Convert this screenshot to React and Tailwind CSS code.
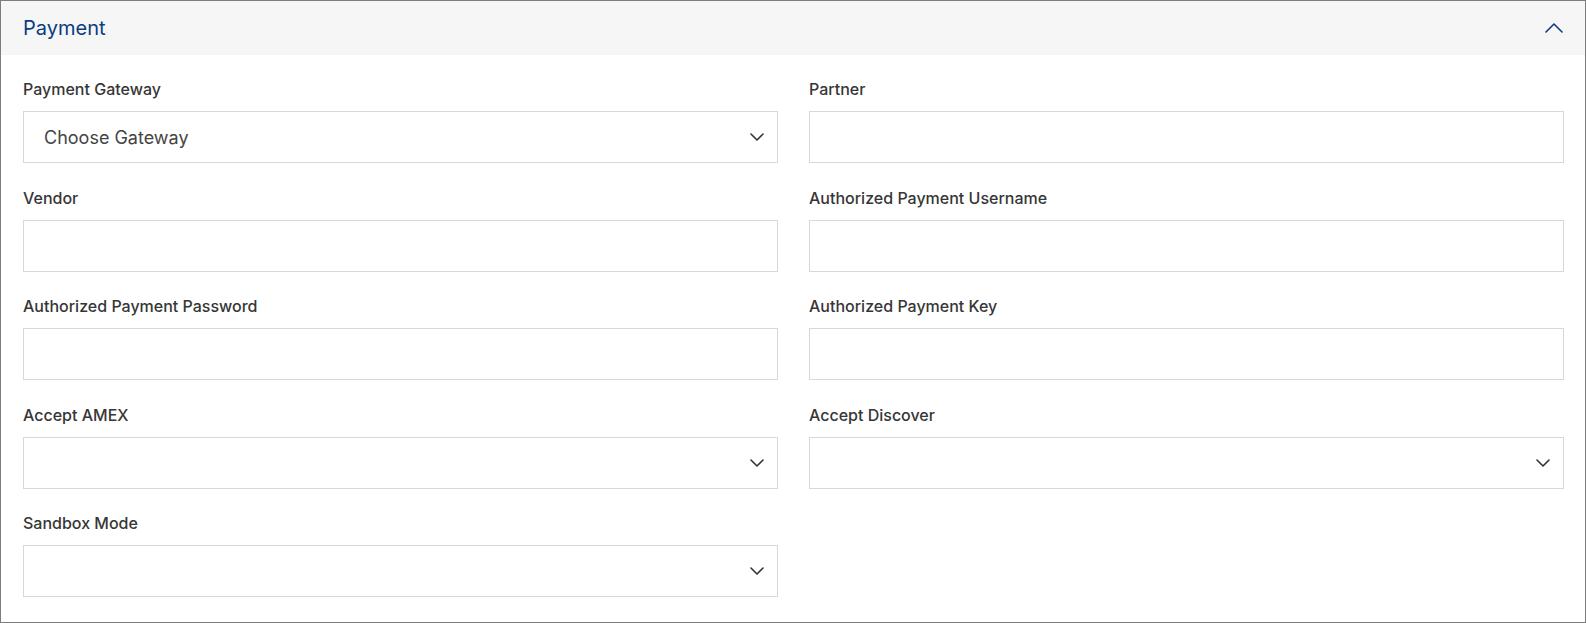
import React from 'react';

const fields = [
  { label: 'Payment Gateway', type: 'select', placeholder: 'Choose Gateway' },
  { label: 'Partner', type: 'text' },
  { label: 'Vendor', type: 'text' },
  { label: 'Authorized Payment Username', type: 'text' },
  { label: 'Authorized Payment Password', type: 'text' },
  { label: 'Authorized Payment Key', type: 'text' },
  { label: 'Accept AMEX', type: 'select' },
  { label: 'Accept Discover', type: 'select' },
  { label: 'Sandbox Mode', type: 'select' },
];

const ChevronDown = () => (
  <svg width="14" height="8" viewBox="0 0 14 8" fill="none">
    <polyline points="1,1 7,7 13,1" stroke="#333" strokeWidth="1.6" strokeLinecap="round" strokeLinejoin="round" />
  </svg>
);

const ChevronUp = () => (
  <svg width="18" height="10" viewBox="0 0 18 10" fill="none">
    <polyline points="1,9 9,1 17,9" stroke="#0b3d80" strokeWidth="1.6" strokeLinecap="round" strokeLinejoin="round" />
  </svg>
);

const Field = ({ field }) => (
  <div>
    <div className="h-5 mb-3 text-[16px] leading-5 font-medium text-[#363636]">{field.label}</div>
    {field.type === 'select' ? (
      <div className="h-[52px] border border-[#d8d8d8] bg-white flex items-center justify-between pl-5 pr-[13px]">
        <span className="text-[18px] text-[#444]">{field.placeholder || ''}</span>
        <ChevronDown />
      </div>
    ) : (
      <input type="text" className="block w-full h-[52px] border border-[#d8d8d8] bg-white outline-none px-5" />
    )}
  </div>
);

export default function App() {
  return (
    <div className="w-full h-[623px] bg-white font-['Inter',sans-serif]">
      <div className="border border-[#7d7d7d] h-full">
        {/* Header */}
        <div className="h-[54px] bg-[#f6f6f6] flex items-center justify-between pl-[22px] pr-[22px]">
          <span className="text-[20px] text-[#0b3d80]">Payment</span>
          <ChevronUp />
        </div>

        {/* Form */}
        <div className="pl-[22px] pr-[21px] pt-6 pb-[25px] grid grid-cols-2 gap-x-[31px] gap-y-[24.5px]">
          {fields.map(f => (
            <Field key={f.label} field={f} />
          ))}
        </div>
      </div>
    </div>
  );
}
